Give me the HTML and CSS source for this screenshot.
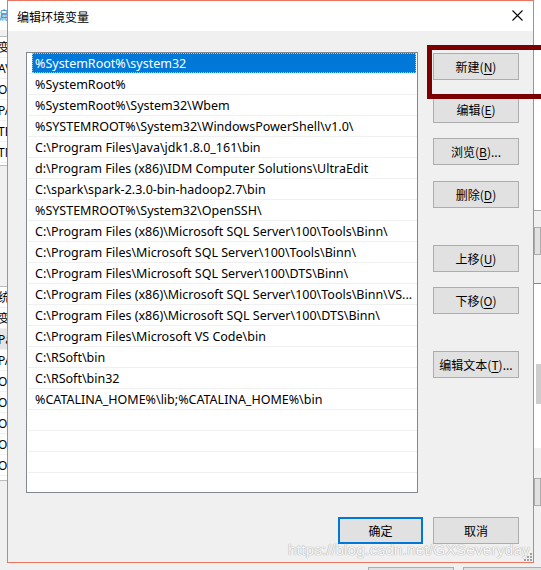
FILE: index.html
```html
<!DOCTYPE html>
<html lang="zh-CN">
<head>
<meta charset="utf-8">
<title>编辑环境变量</title>
<link rel="stylesheet" href="styles.css">
</head>
<body>
<div class="desktop">
  <div class="bg-left">
    <div class="bgl-title">编</div>
    <div class="bgl-block top">
      <div class="bgl-row">变</div>
      <div class="bgl-row">AV</div>
      <div class="bgl-row">O</div>
      <div class="bgl-row">PA</div>
      <div class="bgl-row">TE</div>
      <div class="bgl-row">TM</div>
    </div>
    <div class="bgl-block bottom">
      <div class="bgl-row">统</div>
      <div class="bgl-row">变</div>
      <div class="bgl-row hl">Pa</div>
      <div class="bgl-row">PA</div>
      <div class="bgl-row">OF</div>
      <div class="bgl-row">OF</div>
      <div class="bgl-row">OF</div>
      <div class="bgl-row">OF</div>
      <div class="bgl-row">Og</div>
    </div>
  </div>

  <div class="bg-right">
    <div class="bgr-white"></div>
    <div class="bgr-btn"></div>
    <div class="bgr-list"><div class="bgr-scroll"></div></div>
    <div class="bgr-btn2"></div>
  </div>

  <div class="bg-bottom">
    <div class="bgb-btn b1"></div>
    <div class="bgb-btn b2"></div>
  </div>

  <div class="dialog">
    <div class="titlebar">
      <span class="title">编辑环境变量</span>
      <svg class="close" width="11" height="11" viewBox="0 0 11 11"><path d="M0.5 0.5 L10.5 10.5 M10.5 0.5 L0.5 10.5" stroke="#000" stroke-width="1.1" fill="none"/></svg>
    </div>
    <div class="body">
      <div class="main">
        <div class="listbox">
          <div class="row sel"><span class="lbl">%SystemRoot%\system32</span></div>
          <div class="row"><span class="lbl">%SystemRoot%</span></div>
          <div class="row"><span class="lbl">%SystemRoot%\System32\Wbem</span></div>
          <div class="row"><span class="lbl">%SYSTEMROOT%\System32\WindowsPowerShell\v1.0\</span></div>
          <div class="row"><span class="lbl">C:\Program Files\Java\jdk1.8.0_161\bin</span></div>
          <div class="row"><span class="lbl">d:\Program Files (x86)\IDM Computer Solutions\UltraEdit</span></div>
          <div class="row"><span class="lbl">C:\spark\spark-2.3.0-bin-hadoop2.7\bin</span></div>
          <div class="row"><span class="lbl">%SYSTEMROOT%\System32\OpenSSH\</span></div>
          <div class="row"><span class="lbl">C:\Program Files (x86)\Microsoft SQL Server\100\Tools\Binn\</span></div>
          <div class="row"><span class="lbl">C:\Program Files\Microsoft SQL Server\100\Tools\Binn\</span></div>
          <div class="row"><span class="lbl">C:\Program Files\Microsoft SQL Server\100\DTS\Binn\</span></div>
          <div class="row"><span class="lbl">C:\Program Files (x86)\Microsoft SQL Server\100\Tools\Binn\VS...</span></div>
          <div class="row"><span class="lbl">C:\Program Files (x86)\Microsoft SQL Server\100\DTS\Binn\</span></div>
          <div class="row"><span class="lbl">C:\Program Files\Microsoft VS Code\bin</span></div>
          <div class="row"><span class="lbl">C:\RSoft\bin</span></div>
          <div class="row"><span class="lbl">C:\RSoft\bin32</span></div>
          <div class="row"><span class="lbl">%CATALINA_HOME%\lib;%CATALINA_HOME%\bin</span></div>
          <div class="row"></div>
          <div class="row"></div>
          <div class="row"></div>
          <div class="row"></div>
        </div>
        <div class="side">
          <div class="btn-wrap new-wrap"><button class="btn">新建(<u>N</u>)</button></div>
          <button class="btn g16">编辑(<u>E</u>)</button>
          <button class="btn g15">浏览(<u>B</u>)...</button>
          <button class="btn g16">删除(<u>D</u>)</button>
          <button class="btn g37">上移(<u>U</u>)</button>
          <button class="btn g15">下移(<u>O</u>)</button>
          <button class="btn g37">编辑文本(<u>T</u>)...</button>
        </div>
      </div>
      <div class="footer">
        <button class="btn ok">确定</button>
        <button class="btn">取消</button>
      </div>
    </div>
  </div>

  <div class="watermark">https://blog.csdn.net/GXSeveryday</div>
  <svg class="grip" width="8" height="8" viewBox="0 0 8 8"><g fill="#a0a0a0"><rect x="6" y="0" width="2" height="2"/><rect x="3" y="3" width="2" height="2"/><rect x="6" y="3" width="2" height="2"/><rect x="0" y="6" width="2" height="2"/><rect x="3" y="6" width="2" height="2"/><rect x="6" y="6" width="2" height="2"/></g></svg>
</div>
</body>
</html>
```

FILE: styles.css
```css
* { box-sizing: border-box; }
html, body { margin: 0; padding: 0; }
body {
  font-family: "Noto Sans", "Noto Sans CJK SC", sans-serif;
  font-size: 12px;
  color: #000;
  background: #f0f0f0;
}
.desktop {
  position: relative;
  width: 541px;
  height: 570px;
  overflow: hidden;
  background: #f0f0f0;
}

/* background windows */
.bg-left {
  position: absolute;
  left: 0; top: 0;
  width: 8px; height: 570px;
  overflow: hidden;
  background: #f0f0f0;
}
.bgl-title {
  height: 30px;
  background: #fff;
  font-family: "Noto Sans CJK SC", sans-serif;
  color: #3a8ec8;
  line-height: 30px;
  font-size: 12px;
  text-indent: -4px;
}
.bgl-block {
  background: #fff;
  border-top: 1px solid #bcbcbc;
  border-bottom: 1px solid #bcbcbc;
  white-space: nowrap;
}
.bgl-block.top { margin-top: 6px; height: 130px; }
.bgl-block.bottom { margin-top: 120px; height: 195px; }
.bgl-row {
  height: 21px;
  line-height: 21px;
  font-size: 12px;
  text-indent: -2px;
  border-bottom: 1px solid #f0f0f0;
}
.bgl-row.hl { background: #e5e5e5; }

.bg-right {
  position: absolute;
  left: 534px; top: 0;
  width: 7px; height: 570px;
  background: #f0f0f0;
}
.bgr-white { height: 211px; background: #fff; border-bottom: 1px solid #a8a8a8; }
.bgr-btn { margin-top: 16px; height: 28px; background: #e1e1e1; border: 1px solid #adadad; }
.bgr-list { margin-top: 28px; height: 165px; background: #fff; border-top: 1px solid #828790; padding-top: 80px; }
.bgr-scroll { width: 5px; margin-left: 2px; height: 40px; background: #cdcdcd; }
.bgr-btn2 { margin-top: 30px; height: 28px; background: #e1e1e1; border: 1px solid #adadad; }

.bg-bottom {
  position: absolute;
  left: 0; top: 563px;
  width: 541px; height: 7px;
}
.bgb-btn {
  position: absolute;
  top: 4px;
  height: 10px;
  background: #e1e1e1;
  border: 1px solid #adadad;
}
.bgb-btn.b1 { left: 368px; width: 86px; }
.bgb-btn.b2 { left: 463px; width: 86px; }

/* dialog */
.dialog {
  position: absolute;
  left: 7px; top: 0;
  width: 527px;
  height: 563px;
  border: 1px solid #ea7560;
  background: #f0f0f0;
  display: flex;
  flex-direction: column;
}
.titlebar {
  height: 30px;
  flex: none;
  background: #fff;
  display: flex;
  align-items: center;
  justify-content: space-between;
  padding: 0 10px 0 9px;
}
.title {
  font-family: "Noto Sans CJK SC", sans-serif;
  font-size: 12px;
}
.close { display: block; margin-top: -2px; }

.body {
  flex: 1;
  padding: 21px 14px 0 18px;
  display: flex;
  flex-direction: column;
}
.main {
  display: flex;
  align-items: flex-start;
}
.listbox {
  width: 392px;
  height: 441px;
  flex: none;
  border: 1px solid #828790;
  background: #fff;
  overflow: hidden;
}
.row {
  height: 21px;
  border-bottom: 1px solid #f0f0f0;
  display: flex;
  align-items: stretch;
  margin-left: 1px;
}
.lbl {
  margin-left: 4px;
  padding-left: 3px;
  padding-top: 2px;
  line-height: 18px;
  font-size: 12.5px;
  white-space: nowrap;
  overflow: hidden;
  flex: 1;
  margin-right: 1px;
}
.row.sel .lbl {
  background: #0078d7;
  color: #fff;
  outline: 1px dotted #99c9ef;
  outline-offset: -1px;
}

.side {
  margin-left: 15px;
  display: flex;
  flex-direction: column;
  padding-top: 1px;
}
.btn {
  width: 86px;
  height: 27px;
  padding: 0;
  margin: 0;
  background: #e1e1e1;
  border: 1px solid #adadad;
  font-family: "Noto Sans CJK SC", sans-serif;
  font-size: 12px;
  color: #000;
  display: flex;
  align-items: center;
  justify-content: center;
  white-space: nowrap;
}
.btn u { text-underline-offset: 2px; }
.btn-wrap { position: relative; }
.new-wrap::after {
  content: "";
  position: absolute;
  left: -6px; top: -8px;
  width: 113px; height: 44px;
  border: 5px solid #7b0000;
}
.g15 { margin-top: 15px; }
.g16 { margin-top: 16px; }
.g37 { margin-top: 37px; }

.footer {
  display: flex;
  justify-content: flex-end;
  gap: 10px;
  margin-top: 24px;
}
.footer .btn.ok {
  width: 85px;
  border: 2px solid #0078d7;
}

.watermark {
  position: absolute;
  left: 288px; top: 541px;
  font-family: "Liberation Sans", sans-serif;
  font-size: 15.5px;
  letter-spacing: 0.1px;
  color: rgba(255,255,255,0.92);
  text-shadow: 0 0 1px #a8a8a8, 0 0 1px #a8a8a8;
  white-space: nowrap;
}
.grip { position: absolute; left: 524px; top: 553px; }
```
